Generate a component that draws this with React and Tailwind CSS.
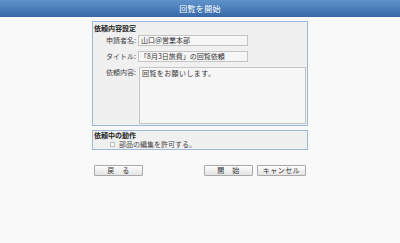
import React from "react";

const font = { fontFamily: '"Noto Sans CJK JP", "Noto Sans", sans-serif' };

const Field = ({ label, children, className = "" }) => (
  <div className={`flex ${className}`}>
    <div className="w-[44px] shrink-0 text-right pr-[2px] text-[7px] leading-[11px] text-[#4a4a4a]">{label}</div>
    {children}
  </div>
);

const Button = ({ children, className = "" }) => (
  <button
    className={`h-[11px] w-[49px] border border-[#a9a9a9] rounded-[1px] bg-gradient-to-b from-[#fdfdfd] to-[#e4e4e4] text-[7px] leading-[9px] text-[#333] tracking-[0.5px] ${className}`}
  >
    {children}
  </button>
);

export default function App() {
  return (
    <div className="w-[400px] h-[243px] bg-[#f9f9f9]" style={font}>
      {/* Header */}
      <div className="h-[17px] bg-gradient-to-b from-[#6093cc] to-[#3868a8] flex items-center justify-center">
        <span className="text-white text-[8px] leading-[8px] tracking-[0.3px]">回覧を開始</span>
      </div>

      <div className="w-[216px] mx-auto">
        {/* 依頼内容設定 */}
        <div className="mt-[4px] border border-[#9cb9dd] bg-[#f0f0f0] px-[1px] pb-[1px]">
          <div className="h-[13px] leading-[11px] pt-[1px] text-[7px] font-bold text-[#222]">依頼内容設定</div>
          <Field label="申請者名:">
            <div className="h-[11px] w-[110px] border border-[#c4c4c4] bg-[#f6f6f6] px-[2px] text-[7px] leading-[9px] text-[#333]">
              山口＠営業本部
            </div>
          </Field>
          <Field label="タイトル:" className="mt-[5px]">
            <div className="h-[11px] w-[110px] border border-[#c4c4c4] bg-[#f6f6f6] px-[1px] text-[7px] leading-[9px] text-[#333]">
              「8月3日旅費」の回覧依頼
            </div>
          </Field>
          <Field label="依頼内容:" className="mt-[5px]">
            <div className="h-[57px] w-[167px] ml-[1px] border border-[#c4c4c4] bg-[#f6f6f6] px-[2px] pt-[1px] text-[7px] leading-[9px] text-[#333] tracking-[0.4px]">
              回覧をお願いします。
            </div>
          </Field>
        </div>

        {/* 依頼中の動作 */}
        <div className="mt-[4px] h-[20px] border border-[#9cb9dd] bg-[#f0f0f0] px-[1px]">
          <div className="h-[8px] leading-[8px] text-[7px] font-bold text-[#222]">依頼中の動作</div>
          <div className="flex items-center h-[10px] pl-[16px]">
            <span className="w-[5px] h-[5px] border border-[#bdbdbd] bg-[#fafafa]" />
            <span className="ml-[4px] text-[7px] leading-[10px] text-[#4a4a4a]">部品の編集を許可する。</span>
          </div>
        </div>

        {/* Buttons */}
        <div className="mt-[15px] flex px-[2px]">
          <Button className="w-[48px]">戻　る</Button>
          <div className="flex-1" />
          <Button>開　始</Button>
          <Button className="ml-[4px]">キャンセル</Button>
        </div>
      </div>
    </div>
  );
}
